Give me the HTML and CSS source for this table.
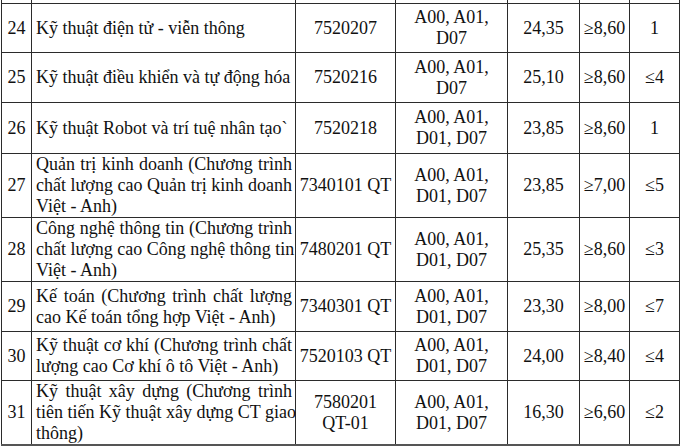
FILE: index.html
```html
<!DOCTYPE html>
<html lang="vi">
<head>
<meta charset="utf-8">
<title>Bảng điểm chuẩn</title>
<link rel="stylesheet" href="styles.css">
</head>
<body>
<div class="sheet">
<table class="scores">
  <colgroup>
    <col class="c-no"><col class="c-name"><col class="c-code"><col class="c-combo"><col class="c-score"><col class="c-min"><col class="c-rank">
  </colgroup>
  <tbody>
    <tr class="edge-top"><td></td><td></td><td></td><td></td><td></td><td></td><td></td></tr>
    <tr class="h49">
      <td>24</td><td class="name">Kỹ thuật điện tử - viễn thông</td><td>7520207</td><td>A00, A01,<br>D07</td><td>24,35</td><td>≥8,60</td><td>1</td>
    </tr>
    <tr class="h50">
      <td>25</td><td class="name">Kỹ thuật điều khiển và tự động hóa</td><td>7520216</td><td>A00, A01,<br>D07</td><td>25,10</td><td>≥8,60</td><td>≤4</td>
    </tr>
    <tr class="h51">
      <td>26</td><td class="name">Kỹ thuật Robot và trí tuệ nhân tạo`</td><td>7520218</td><td>A00, A01,<br>D01, D07</td><td>23,85</td><td>≥8,60</td><td>1</td>
    </tr>
    <tr class="h64">
      <td>27</td>
      <td class="name"><span class="ln">Quản trị kinh doanh (Chương trình</span><span class="ln">chất lượng cao Quản trị kinh doanh</span><span class="ln end">Việt - Anh)</span></td>
      <td>7340101 QT</td><td>A00, A01,<br>D01, D07</td><td>23,85</td><td>≥7,00</td><td>≤5</td>
    </tr>
    <tr class="h63">
      <td>28</td>
      <td class="name"><span class="ln">Công nghệ thông tin (Chương trình</span><span class="ln">chất lượng cao Công nghệ thông tin</span><span class="ln end">Việt - Anh)</span></td>
      <td>7480201 QT</td><td>A00, A01,<br>D01, D07</td><td>25,35</td><td>≥8,60</td><td>≤3</td>
    </tr>
    <tr class="h50">
      <td>29</td>
      <td class="name"><span class="ln">Kế toán (Chương trình chất lượng</span><span class="ln end">cao Kế toán tổng hợp Việt - Anh)</span></td>
      <td>7340301 QT</td><td>A00, A01,<br>D01, D07</td><td>23,30</td><td>≥8,00</td><td>≤7</td>
    </tr>
    <tr class="h49">
      <td>30</td>
      <td class="name"><span class="ln">Kỹ thuật cơ khí (Chương trình chất</span><span class="ln end">lượng cao Cơ khí ô tô Việt - Anh)</span></td>
      <td>7520103 QT</td><td>A00, A01,<br>D01, D07</td><td>24,00</td><td>≥8,40</td><td>≤4</td>
    </tr>
    <tr class="h64 last">
      <td>31</td>
      <td class="name"><span class="ln">Kỹ thuật xây dựng (Chương trình</span><span class="ln">tiên tiến Kỹ thuật xây dựng CT giao</span><span class="ln end">thông)</span></td>
      <td>7580201<br>QT-01</td><td>A00, A01,<br>D01, D07</td><td>16,30</td><td>≥6,60</td><td>≤2</td>
    </tr>
    <tr class="edge-bottom"><td></td><td></td><td></td><td></td><td></td><td></td><td></td></tr>
  </tbody>
</table>
</div>
</body>
</html>
```

FILE: styles.css
```css
html, body {
  margin: 0;
  padding: 0;
  background: #ffffff;
}

.sheet {
  width: 680px;
  height: 446px;
  overflow: hidden;
  padding-left: 1px;
  box-sizing: border-box;
}

.scores {
  border-collapse: collapse;
  table-layout: fixed;
  width: 678px;
  font-family: "Liberation Serif", "Times New Roman", serif;
  font-size: 18px;
  line-height: 21px;
  color: #111111;
}

.c-no { width: 30px; }
.c-name { width: 264px; }
.c-code { width: 100px; }
.c-combo { width: 112px; }
.c-score { width: 72px; }
.c-min { width: 50px; }
.c-rank { width: 50px; }

.scores td {
  border: 1px solid #2b2b2b;
  padding: 0 2px;
  text-align: center;
  vertical-align: middle;
  white-space: nowrap;
}

.scores td.name {
  text-align: left;
  padding: 0 3px 0 4px;
}

.ln {
  display: block;
  text-align: justify;
  text-align-last: justify;
}

.ln.end {
  text-align-last: left;
}

.edge-top td {
  border-top: 0;
  height: 3px;
  padding: 0;
}

.edge-bottom td {
  border-bottom: 0;
  height: 4px;
  padding: 0;
}

.last td {
  border-bottom: 2px solid #555555;
}

.h49 { height: 49px; }
.h50 { height: 50px; }
.h51 { height: 51px; }
.h63 { height: 63px; }
.h64 { height: 64px; }
```
